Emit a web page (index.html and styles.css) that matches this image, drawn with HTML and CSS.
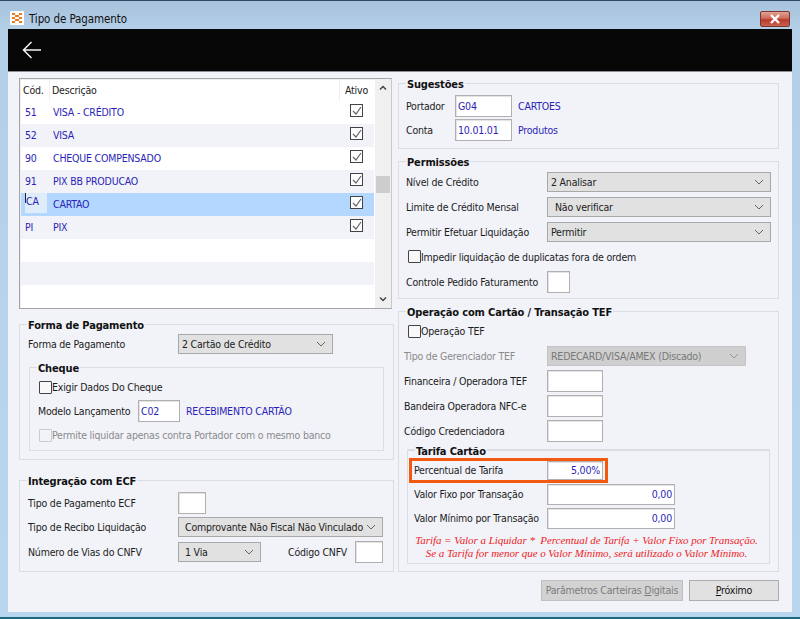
FILE: index.html
```html
<!DOCTYPE html>
<html lang="pt">
<head>
<meta charset="utf-8">
<title>Tipo de Pagamento</title>
<link rel="stylesheet" href="styles.css">
</head>
<body>
<div class="window">
  <header class="titlebar">
    <svg class="app-icon" width="14" height="14" viewBox="0 0 14 14"><rect width="14" height="14" rx="1" fill="#fff"/><path d="M2 2h3v2H2zM9 2h3v2H9zM5 4h4v2H5zM2 6h3v2H2zM9 6h3v2H9zM5 8h4v2H5zM2 10h3v2H2zM9 10h3v2H9z" fill="#f07a20"/></svg>
    <span class="title">Tipo de Pagamento</span>
    <div class="close"><svg width="12" height="10" viewBox="0 0 12 10"><path d="M2 1l8 8M10 1L2 9" stroke="#fff" stroke-width="2.4" fill="none"/></svg></div>
  </header>
  <div class="toolbar">
    <svg width="20" height="18" viewBox="0 0 20 18"><path d="M19 9H1.5M9.500 1L1.500 9l8 8" stroke="#f4f4f4" stroke-width="1.500" fill="none"/></svg>
  </div>
  <main class="content">
    <div class="col-left">
      <div class="grid">
        <div class="grid-body">
          <div class="grow head"><span class="c1">Cód.</span><span class="c2">Descrição</span><span class="c3">Ativo</span></div>
          <div class="grow"><span class="c1 v">51</span><span class="c2 v">VISA - CRÉDITO</span><span class="c3"><i class="gc"><svg width="10" height="10" viewBox="0 0 10 10"><path d="M1 5l3 3 5-7" stroke="#666" stroke-width="1.200" fill="none"/></svg></i></span></div>
          <div class="grow alt"><span class="c1 v">52</span><span class="c2 v">VISA</span><span class="c3"><i class="gc"><svg width="10" height="10" viewBox="0 0 10 10"><path d="M1 5l3 3 5-7" stroke="#666" stroke-width="1.200" fill="none"/></svg></i></span></div>
          <div class="grow"><span class="c1 v">90</span><span class="c2 v">CHEQUE COMPENSADO</span><span class="c3"><i class="gc"><svg width="10" height="10" viewBox="0 0 10 10"><path d="M1 5l3 3 5-7" stroke="#666" stroke-width="1.200" fill="none"/></svg></i></span></div>
          <div class="grow alt"><span class="c1 v">91</span><span class="c2 v">PIX BB PRODUCAO</span><span class="c3"><i class="gc"><svg width="10" height="10" viewBox="0 0 10 10"><path d="M1 5l3 3 5-7" stroke="#666" stroke-width="1.200" fill="none"/></svg></i></span></div>
          <div class="grow sel"><span class="c1 v cur">CA</span><span class="c2 v">CARTAO</span><span class="c3"><i class="gc"><svg width="10" height="10" viewBox="0 0 10 10"><path d="M1 5l3 3 5-7" stroke="#666" stroke-width="1.200" fill="none"/></svg></i></span></div>
          <div class="grow alt"><span class="c1 v">PI</span><span class="c2 v">PIX</span><span class="c3"><i class="gc"><svg width="10" height="10" viewBox="0 0 10 10"><path d="M1 5l3 3 5-7" stroke="#666" stroke-width="1.200" fill="none"/></svg></i></span></div>
          <div class="grow"></div>
          <div class="grow alt"></div>
          <div class="grow"></div>
        </div>
        <div class="sbar">
          <svg class="arr" width="8" height="6" viewBox="0 0 8 6"><path d="M1 4.500L4 1.500l3 3" stroke="#444" stroke-width="1.500" fill="none"/></svg>
          <div class="thumb"></div>
          <svg class="arr" width="8" height="6" viewBox="0 0 8 6"><path d="M1 1.500L4 4.500l3-3" stroke="#444" stroke-width="1.500" fill="none"/></svg>
        </div>
      </div>

      <section class="group forma">
        <div class="legend">Forma de Pagamento</div>
        <div class="row h24"><label class="lbl w150">Forma de Pagamento</label>
          <div class="combo w155"><span>2 Cartão de Crédito</span><svg width="10" height="6" viewBox="0 0 10 6"><path d="M1 1l4 4 4-4" stroke="#666" fill="none"/></svg></div>
        </div>
        <section class="group cheque">
          <div class="legend">Cheque</div>
          <div class="row h24 pl1"><i class="cb"></i><label>Exigir Dados Do Cheque</label></div>
          <div class="row h24"><label class="lbl w100">Modelo Lançamento</label><div class="inp w42 v">C02</div><span class="v link">RECEBIMENTO CARTÃO</span></div>
          <div class="row h24 pl1 dis"><i class="cb off"></i><label>Permite liquidar apenas contra Portador com o mesmo banco</label></div>
        </section>
      </section>

      <section class="group ecf">
        <div class="legend">Integração com ECF</div>
        <div class="row first26"><label class="lbl w150">Tipo de Pagamento ECF</label><div class="inp w28"></div></div>
        <div class="row h22"><label class="lbl w150">Tipo de Recibo Liquidação</label>
          <div class="combo w205 p6"><span>Comprovante Não Fiscal Não Vinculado</span><svg width="10" height="6" viewBox="0 0 10 6"><path d="M1 1l4 4 4-4" stroke="#666" fill="none"/></svg></div>
        </div>
        <div class="row h28"><label class="lbl w150">Número de Vias do CNFV</label>
          <div class="combo w83 p6"><span>1 Via</span><svg width="10" height="6" viewBox="0 0 10 6"><path d="M1 1l4 4 4-4" stroke="#666" fill="none"/></svg></div>
          <label class="cnfv">Código CNFV</label><div class="inp w28"></div>
        </div>
      </section>
    </div>

    <div class="col-right">
      <section class="group sug">
        <div class="legend">Sugestões</div>
        <div class="row h24"><label class="lbl w49">Portador</label><div class="inp w57 v">G04</div><span class="v link">CARTOES</span></div>
        <div class="row h24"><label class="lbl w49">Conta</label><div class="inp w57 v">10.01.01</div><span class="v link">Produtos</span></div>
      </section>

      <section class="group perm">
        <div class="legend">Permissões</div>
        <div class="row h25"><label class="lbl w141">Nível de Crédito</label><div class="combo w224"><span>2 Analisar</span><svg width="10" height="6" viewBox="0 0 10 6"><path d="M1 1l4 4 4-4" stroke="#666" fill="none"/></svg></div></div>
        <div class="row h25"><label class="lbl w141">Limite de Crédito Mensal</label><div class="combo w224 p8"><span>Não verificar</span><svg width="10" height="6" viewBox="0 0 10 6"><path d="M1 1l4 4 4-4" stroke="#666" fill="none"/></svg></div></div>
        <div class="row h25"><label class="lbl w141">Permitir Efetuar Liquidação</label><div class="combo w224"><span>Permitir</span><svg width="10" height="6" viewBox="0 0 10 6"><path d="M1 1l4 4 4-4" stroke="#666" fill="none"/></svg></div></div>
        <div class="row h25 pl2"><i class="cb"></i><label>Impedir liquidação de duplicatas fora de ordem</label></div>
        <div class="row h25"><label class="lbl w141">Controle Pedido Faturamento</label><div class="inp w23"></div></div>
      </section>

      <section class="group oper">
        <div class="legend">Operação com Cartão / Transação TEF</div>
        <div class="row h24 pl2"><i class="cb"></i><label>Operação TEF</label></div>
        <div class="row h25 dis"><label class="lbl tight">Tipo de Gerenciador TEF</label><div class="combo off w199"><span>REDECARD/VISA/AMEX (Discado)</span><svg width="10" height="6" viewBox="0 0 10 6"><path d="M1 1l4 4 4-4" stroke="#999" fill="none"/></svg></div></div>
        <div class="row h25"><label class="lbl tight">Financeira / Operadora TEF</label><div class="inp w56"></div></div>
        <div class="row h25"><label class="lbl tight">Bandeira Operadora NFC-e</label><div class="inp w56"></div></div>
        <div class="row h25"><label class="lbl tight">Código Credenciadora</label><div class="inp w56"></div></div>
        <section class="group tarifa">
          <div class="legend">Tarifa Cartão</div>
          <div class="row h24 marked"><label class="lbl w133">Percentual de Tarifa</label><div class="inp w56 v num">5,00%</div><div class="mark"></div></div>
          <div class="row h24"><label class="lbl w133">Valor Fixo por Transação</label><div class="inp w128 v num">0,00</div></div>
          <div class="row h24"><label class="lbl w133">Valor Mínimo por Transação</label><div class="inp w128 v num">0,00</div></div>
          <p class="note">Tarifa = Valor a Liquidar *&nbsp; Percentual de Tarifa + Valor Fixo por Transação.<br>Se a Tarifa for menor que o Valor Mínimo, será utilizado o Valor Mínimo.</p>
        </section>
      </section>

      <div class="actions">
        <div class="btn off wide">Parâmetros Carteiras <u>D</u>igitais</div>
        <div class="btn next"><u>P</u>róximo</div>
      </div>
    </div>
  </main>
</div>
</body>
</html>
```
FILE: styles.css
```css
* { box-sizing: border-box; }
html, body { margin: 0; padding: 0; }
body { width: 800px; height: 619px; overflow: hidden; background: #b9d4ee; font-family: "DejaVu Sans Condensed", "DejaVu Sans", "Liberation Sans", sans-serif; font-stretch: condensed; font-size: 10.500px; letter-spacing: -0.2px; color: #1c1c1c; }
.window { width: 800px; height: 619px; padding: 0 8px; border: 1px solid #2c4a60; border-width: 1px 0 2px; border-bottom-color: #1c6a80; background: linear-gradient(180deg, #a8c2dc 0, #b4cfe8 30px, #b9d6f1 619px); display: flex; flex-direction: column; }
.titlebar { height: 28px; display: flex; align-items: center; gap: 5px; padding: 6px 0 0 2px; flex: none; }
.title { font-size: 11.500px; letter-spacing: -0.1px; color: #111; padding-top: 1px; }
.close { margin-left: auto; margin-right: 2px; width: 30px; height: 16px; margin-top: 1px; border: 1px solid #7a3830; border-radius: 2px; background: linear-gradient(180deg, #e2a295 0, #cf6b5a 45%, #bb3a2a 55%, #c9604f 100%); display: flex; align-items: center; justify-content: center; }
.toolbar { height: 43px; flex: none; background: #070707; border-bottom: 1px solid #8a8f96; display: flex; align-items: center; padding-left: 14px; }
.content { flex: 1; background: #f2f3f9; display: flex; gap: 4px; padding-left: 11px; margin-bottom: 5px; }
.col-left { width: 375px; padding-top: 6px; }
.col-right { width: 381px; padding-top: 11px; }

.grid { width: 373px; height: 231px; border: 1px solid #a5a5a5; border-right-color: #c8c8c8; background: #fff; display: flex; box-shadow: inset 1px 1px 0 #eee; }
.grid-body { width: 354px; padding: 0 0 0 1px; flex: none; }
.grow { height: 23px; display: flex; align-items: center; }
.grow.head { height: 22px; }
.grow.alt { background: #f2f3f9; }
.grow.sel { background: #b3d7ff; }
.c1 { width: 29px; padding-left: 4px; flex: none; margin-top: -1px; }
.c2 { width: 290px; padding-left: 3px; flex: none; margin-top: -1px; }
.c3 { flex: 1; display: flex; justify-content: center; align-self: flex-start; padding: 3px 1px 0 0; }
.head .c1, .head .c2, .head .c3 { height: 22px; line-height: 23px; border-right: 1px solid #eee; margin-top: 0; padding-top: 0; }
.head .c1 { padding-left: 2px; width: 29px; }
.head .c2 { padding-left: 2px; }
.head .c3 { border-right: 0; }
.v { color: #2a1fb8; }
.c1.cur { background: #dfedfb; height: 20px; margin: 0 3px 3px 4px; width: 22px; padding-left: 1px; line-height: 17px; position: relative; }
.cur::before { content: ""; position: absolute; left: 0; top: 0; width: 1px; height: 10px; background: #222; }
.gc { width: 13px; height: 13px; border: 1px solid #444; background: #fdfdfd; display: flex; align-items: center; justify-content: center; }
.sbar { flex: 1; margin-left: 1px; background: #f0f0f0; display: flex; flex-direction: column; align-items: center; justify-content: space-between; padding: 6px 0; }
.thumb { width: 14px; height: 17px; background: #cdcdcd; margin-top: 85px; margin-bottom: auto; }

.group { border: 1px solid #dcdde2; padding-left: 8px; }
.col-right .group { padding-left: 7px; }
.legend { margin-top: -8px; height: 15px; padding: 1px 1px 0; line-height: 15px; font-size: 11px; letter-spacing: -0.15px; font-weight: 700; width: fit-content; background: #f2f3f9; color: #111; }
.col-left .legend { margin-left: -1px; }
.row { display: flex; align-items: center; white-space: nowrap; }
.h22 { height: 22px; } .h24 { height: 24px; } .h25 { height: 25px; } .h28 { height: 28px; } .first26 { height: 26px; margin-top: 2px; }
.pl1 { padding-left: 1px; } .pl2 { padding-left: 2px; }
.lbl { flex: none; }
.w49 { width: 49px; } .w100 { width: 100px; } .w133 { width: 133px; } .w141 { width: 141px; } .w150 { width: 150px; }
.w23 { width: 23px; } .w28 { width: 28px; } .w42 { width: 42px; } .w56 { width: 56px; } .w57 { width: 57px; } .w128 { width: 128px; }
.w83 { width: 83px; } .w155 { width: 155px; } .w199 { width: 199px; } .w205 { width: 205px; } .w224 { width: 224px; }
.tight { margin-left: -2px; width: 143px; }
.inp { height: 22px; flex: none; background: #fff; border: 1px solid #b0b0b0; box-shadow: inset 1px 1px 0 #e4e4e4; line-height: 20px; padding-left: 2px; }
.inp.num { text-align: right; padding-right: 2px; }
.combo { height: 20px; flex: none; background: #e1e1e1; border: 1px solid #a8a8a8; display: flex; align-items: center; justify-content: space-between; padding: 0 6px 0 3px; color: #222; }
.combo.p6 { padding-left: 6px; }
.combo.p8 { padding-left: 7px; }
.combo.off { background: #cfcfcf; color: #777; border-color: #c4c4c4; }
.link { margin-left: 6px; }
.cb { width: 13px; height: 13px; border: 1px solid #444; background: #f8f8f8; flex: none; border-radius: 1px; }
.cb.off { border-color: #ccc; background: #f2f3f9; }
.dis { color: #8a8a8a; }

.forma { height: 136px; margin-top: 15px; }
.cheque { margin: 11px 0 0 1px; width: 355px; height: 84px; }
.ecf { height: 92px; margin-top: 20px; }
.cnfv { margin-left: 27px; width: 67px; flex: none; }
.sug { height: 66px; }
.sug .legend { margin-bottom: 3px; }
.perm { height: 138px; margin-top: 12px; }
.oper { height: 261px; margin-top: 12px; }
.col-right .tarifa { margin: 6px 0 0 1px; width: 363px; height: 115px; border-width: 2px 1px 1px; padding-left: 6px; }
.tarifa .legend { margin-left: 1px; }
.marked { position: relative; }
.mark { position: absolute; left: -5px; top: 0; width: 199px; height: 25px; border: 3px solid #f35a10; }
.marked .inp { height: 19px; line-height: 17px; }
.h24 .w128 { height: 21px; line-height: 19px; }
.note { margin: 4px 0 0 -6px; width: 357px; text-align: center; font: italic 11px/13px "Liberation Serif", serif; color: #ee1c25; letter-spacing: -0.05px; }
.actions { margin-top: 8px; display: flex; justify-content: flex-end; gap: 6px; }
.btn { height: 21px; line-height: 19px; text-align: center; white-space: nowrap; background: #e1e1e1; border: 1px solid #adadad; color: #111; }
.btn.off { color: #7c7c7c; background: #d2d2d2; border-color: #c0c0c0; }
.wide { width: 142px; }
.next { width: 90px; }
```
